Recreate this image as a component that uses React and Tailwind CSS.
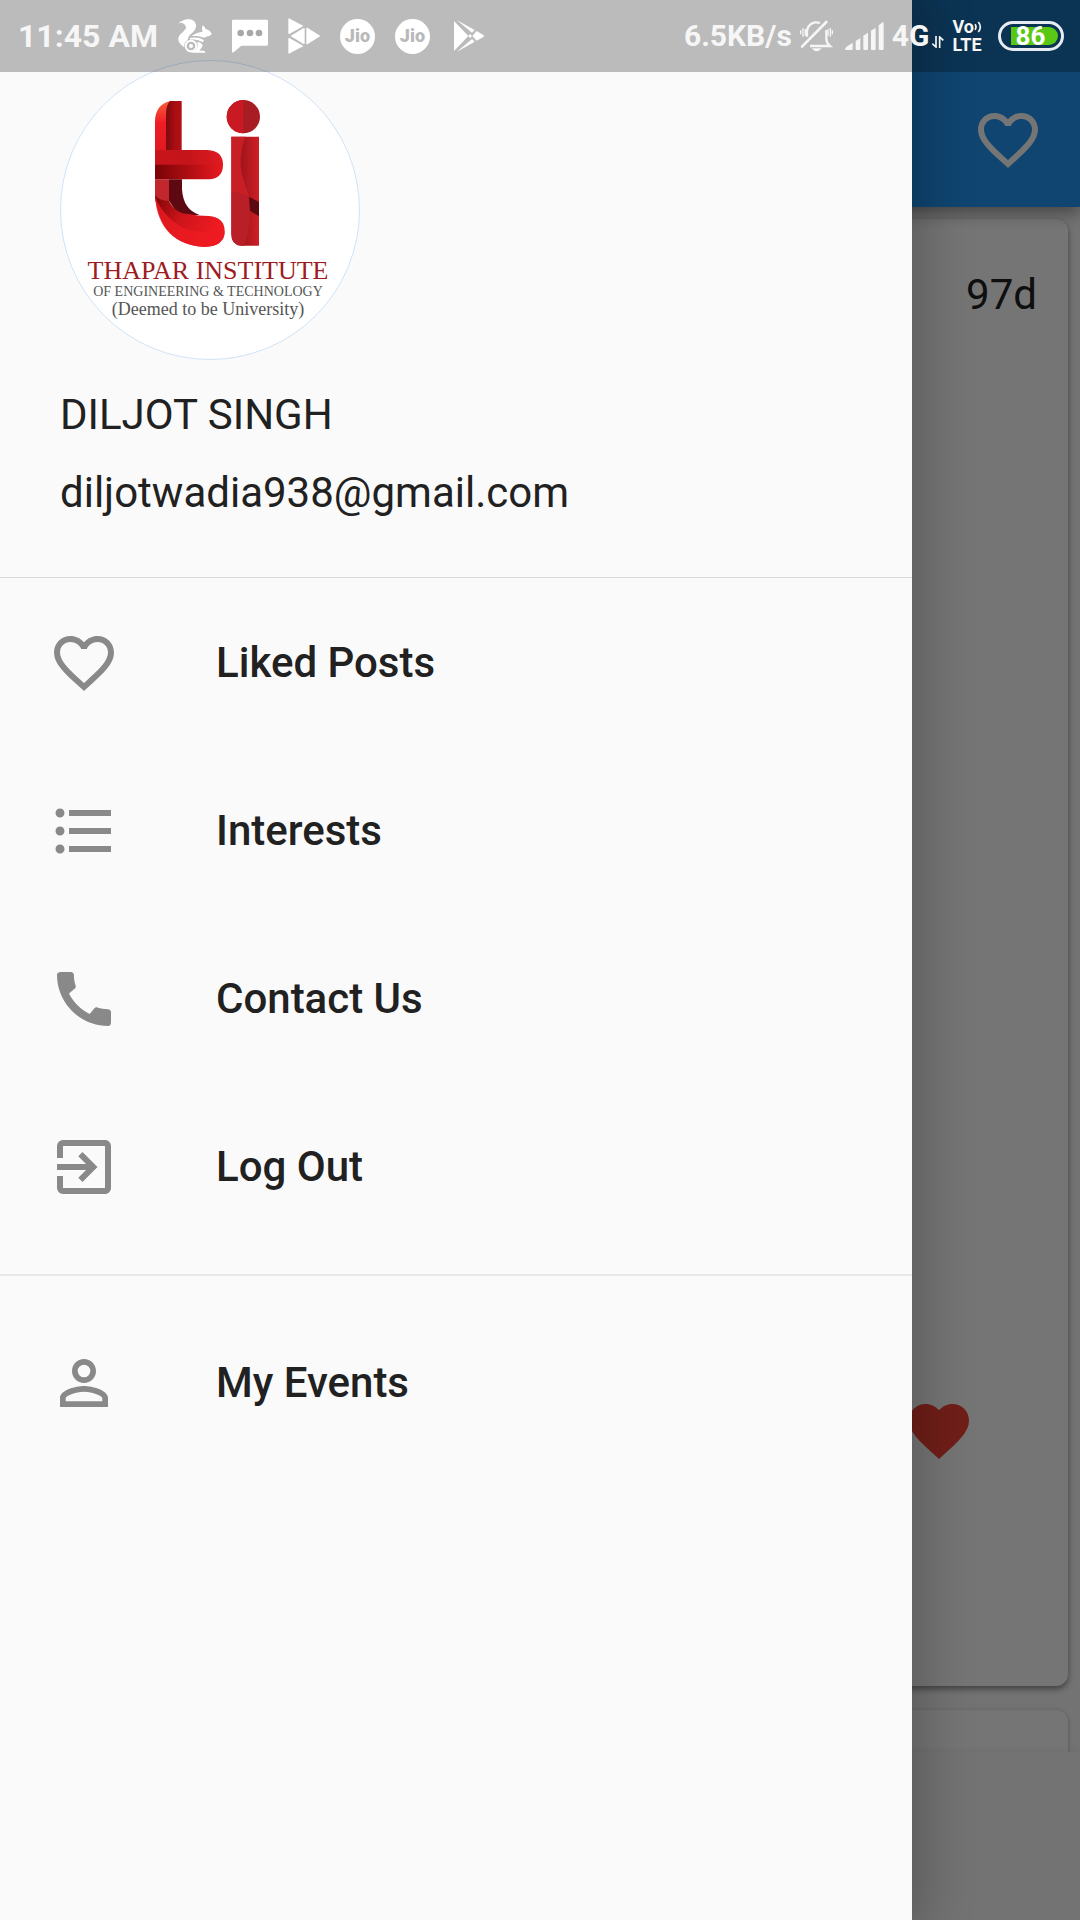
import React from "react";
import {
  MdCall,
  MdExitToApp,
  MdFavorite,
  MdFavoriteBorder,
  MdFormatListBulleted,
  MdPersonOutline,
} from "react-icons/md";

function SquirrelIcon() {
  return (
    <svg className="h-[34px] w-[34px]" viewBox="0 0 102 102" fill="currentColor" aria-hidden="true">
      <path d="M1 14C9 4 24-1 37 1c13 3 20 14 16 26-3 11-15 17-20 24-4 6-3 10-4 13-8 4-12 12-10 21C6 77 0 68 1 58c2-14 18-20 22-29 3-9-4-16-12-18-4 0-7 1-10 3Z" />
      <path d="M74 19c5 4 8 7 9 11 9 2 15 7 18 15-2 5-8 7-16 8-4 1-6 3-6 3-14-5-24-6-38-5 12-8 21-12 33-13-3-7-2-13 0-19Z" />
      <path d="M35 57c17-4 34-1 43 7l-4 6c-10-7-23-10-37-8Z" />
      <path d="M58 68c8 2 13 5 16 10-2 7-6 12-10 17h12c4 0 6 2 6 6H36c18-3 27-16 22-33Z" />
      <circle cx="39" cy="81" r="16" fill="none" stroke="currentColor" strokeWidth="6" />
      <circle cx="39" cy="81" r="6" />
    </svg>
  );
}

function ChatIcon() {
  return (
    <svg className="h-[34px] w-9" viewBox="0 0 108 102" aria-hidden="true">
      <path fill="currentColor" d="M4 2h100q4 0 4 4v70q0 4-4 4H28L3 101q-3 0-3-4V6q0-4 4-4Z" />
      <g fill="#a8a8a8">
        <circle cx="26" cy="42" r="10" />
        <circle cx="54" cy="42" r="10" />
        <circle cx="81" cy="42" r="10" />
      </g>
    </svg>
  );
}

function TrianglesIcon() {
  return (
    <svg
      className="h-9 w-8"
      viewBox="0 0 96 108"
      fill="currentColor"
      stroke="currentColor"
      strokeWidth="4"
      strokeLinejoin="round"
      aria-hidden="true"
    >
      <path d="M3 3 43 24 3 46ZM3 62l40 22L3 105ZM11 54 48 32v44ZM57 31l37 23-37 23Z" />
    </svg>
  );
}

function PlayIcon() {
  return (
    <svg className="h-8 w-[30px]" viewBox="0 0 90 96" fill="currentColor" aria-hidden="true">
      <path d="M0 3 43 48 0 93Z" />
      <path d="M8 0 62 30 54 38ZM8 96 62 65 54 57Z" />
      <path d="m48 42 6 6-6 6-5-6ZM68 33l20 12q4 3 0 6L68 62 55 48Z" />
    </svg>
  );
}

function JioBadge() {
  return (
    <span className="flex size-[35px] items-center justify-center rounded-full bg-white text-[18px] font-black leading-none text-[#b9b9b9]">
      Jio
    </span>
  );
}

function MutedBellIcon() {
  return (
    <svg className="h-8 w-[33px]" viewBox="0 0 99 96" fill="none" stroke="currentColor" strokeWidth="7" aria-hidden="true">
      <path d="M6 80 79 6" strokeWidth="8" strokeLinecap="round" />
      <path d="M21 50V34C23 12 42 3 60 9M30 78h60c-9-8-11-13-11-23V30" />
      <path d="M2 31v12M9 24v26M16 27v20M84 27v20M91 24v26M97 31v12" strokeWidth="4" />
      <path d="M35 85h30q-15 18-30 0Z" fill="currentColor" stroke="none" />
    </svg>
  );
}

function SignalIcon() {
  return (
    <svg className="h-7 w-[39px]" viewBox="0 0 117 84" fill="currentColor" aria-hidden="true">
      <path d="M0 80q1-5 23-18v19q0 3-3 3H3q-3 0-3-4ZM32 57l14-9v33q0 3-3 3h-8q-3 0-3-3ZM55 41l14-9v49q0 3-3 3h-8q-3 0-3-3ZM78 26l14-9v64q0 3-3 3h-8q-3 0-3-3ZM101 10l12-9q3-1 3 3v77q0 3-3 3h-9q-3 0-3-3Z" />
    </svg>
  );
}

function DataArrowsIcon() {
  return (
    <svg className="h-3 w-3" viewBox="0 0 36 36" fill="none" stroke="currentColor" strokeWidth="5" aria-hidden="true">
      <path d="M12 0v33L1 23M23 36V3l11 10" />
    </svg>
  );
}

function VoiceWaves() {
  return (
    <svg className="h-3 w-2" viewBox="0 0 24 36" fill="none" stroke="currentColor" strokeWidth="5" aria-hidden="true">
      <path d="M3 10q6 8 0 16M13 3q12 15 0 30" />
    </svg>
  );
}

function Battery() {
  return (
    <span className="flex h-[30px] w-[66px] rounded-full border-[3px] border-[#e8ecf0] py-[3px] pl-[10px] pr-[3px]">
      <span className="flex flex-1 items-center justify-center rounded-l-xs rounded-r-full bg-[#58c716] pr-2 text-[26px] font-bold leading-none text-white">
        86
      </span>
    </span>
  );
}

function StatusBar() {
  return (
    <div className="absolute inset-x-0 top-0 z-30 flex h-[72px] items-center justify-between bg-black/25 pl-[18px] pr-4 font-bold leading-none text-[#f6f6f6]">
      <div className="flex items-center gap-5 text-[32px] text-white">
        <span className="text-[#f6f6f6]">11:45 AM</span>
        <SquirrelIcon />
        <ChatIcon />
        <TrianglesIcon />
        <JioBadge />
        <JioBadge />
        <span className="pl-1">
          <PlayIcon />
        </span>
      </div>
      <div className="flex items-center gap-2 text-[30px]">
        <span>6.5KB/s</span>
        <MutedBellIcon />
        <span className="pl-1">
          <SignalIcon />
        </span>
        <span className="flex items-center gap-[3px]">
          4G
          <span className="pt-3">
            <DataArrowsIcon />
          </span>
        </span>
        <span className="flex flex-col items-start text-[18px] leading-[18px]">
          <span className="flex items-center">
            Vo
            <VoiceWaves />
          </span>
          <span>LTE</span>
        </span>
        <span className="pl-2">
          <Battery />
        </span>
      </div>
    </div>
  );
}

function InstituteMark() {
  return (
    <svg className="h-[153px] w-[114px]" viewBox="303 141 342 459" role="img" aria-label="ti">
      <defs>
        <linearGradient id="stemLeft" x1="0" y1="0" x2="0" y2="1">
          <stop offset="0" stopColor="#f8603a" />
          <stop offset="0.45" stopColor="#ee1c25" />
          <stop offset="1" stopColor="#e01a22" />
        </linearGradient>
        <linearGradient id="stemRight" x1="0" y1="0" x2="1" y2="0">
          <stop offset="0" stopColor="#7c0a0e" />
          <stop offset="0.6" stopColor="#ab0d13" />
          <stop offset="1" stopColor="#b01016" />
        </linearGradient>
        <linearGradient id="barTop" x1="0" y1="0" x2="1" y2="0">
          <stop offset="0" stopColor="#c8141b" />
          <stop offset="0.5" stopColor="#c4151b" />
          <stop offset="1" stopColor="#e01a21" />
        </linearGradient>
        <linearGradient id="barBottom" x1="0" y1="0" x2="1" y2="0">
          <stop offset="0" stopColor="#780306" />
          <stop offset="1" stopColor="#e8191f" />
        </linearGradient>
        <linearGradient id="hook" x1="0" y1="0" x2="1" y2="0.3">
          <stop offset="0" stopColor="#7d0508" />
          <stop offset="0.45" stopColor="#cc141a" />
          <stop offset="1" stopColor="#f01b22" />
        </linearGradient>
        <linearGradient id="iBody" x1="0" y1="0" x2="1" y2="0">
          <stop offset="0" stopColor="#c51d24" />
          <stop offset="0.4" stopColor="#a3151b" />
          <stop offset="1" stopColor="#cf1f27" />
        </linearGradient>
      </defs>
      <path d="M315 300V215q0-50 45-62l-12 70v77Z" fill="url(#stemLeft)" />
      <path d="M348 300V195q0-30 12-42h35v147Z" fill="url(#stemRight)" />
      <path d="M315 388h42v75l-39-5q-3-12-3-22Z" fill="#c1272d" />
      <path d="M357 388h39v30q4 62 52 76l-60 6-31-48Z" fill="#5e0812" />
      <path d="M315 436q14 17 42 17 20 40 65 40 20 5 55 5 47 4 47 46 0 45-60 47-133-5-149-155Z" fill="url(#hook)" />
      <path d="M315 440q10 140 149 151 60-2 60-47-70 10-122-10-60-30-87-94Z" fill="#ee1a22" fillOpacity="0.8" />
      <path d="M315 300h158q46 2 46 45H315Z" fill="url(#barTop)" />
      <path d="M315 344h204q0 42-43 44H315Z" fill="url(#barBottom)" />
      <circle cx="580" cy="200" r="50" fill="#a81c23" />
      <path d="M580 150a50 50 0 0 0 0 100Z" fill="#c91a23" />
      <path d="M544 260h83v327h-54q-29-2-29-35Z" fill="url(#iBody)" />
      <path d="M544 260h42q-26 70-5 130l16 50-53-16Z" fill="#c81f26" />
      <path d="M544 424l53 16q10 80-14 147h-10q-29-2-29-35Z" fill="#b91f26" />
      <path d="M597 440l30 16v43l-27-17Z" fill="#5e0812" />
    </svg>
  );
}

function Avatar() {
  return (
    <div className="flex size-[300px] flex-col items-center whitespace-nowrap rounded-full border border-[#d0e3f7] bg-white pr-1 pt-9 font-['Liberation_Serif',serif] text-[#555]">
      <InstituteMark />
      <div className="mt-2 text-[26px] leading-[26px] text-[#9c1c22]">THAPAR INSTITUTE</div>
      <div className="text-[14px] leading-4">OF ENGINEERING &amp; TECHNOLOGY</div>
      <div className="text-[18px] leading-[18px]">(Deemed to be University)</div>
    </div>
  );
}

function MenuItem({ icon: Icon, label }) {
  return (
    <li>
      <button type="button" className="flex h-[168px] w-full items-center gap-24 pl-12 text-left font-medium">
        <Icon className="size-[72px] text-[#898989]" aria-hidden="true" />
        {label}
      </button>
    </li>
  );
}

function Drawer() {
  return (
    <aside className="absolute inset-y-0 left-0 z-20 w-[calc(100%-168px)] bg-[#fafafa] text-[42px] leading-[48px] text-[#212121] shadow-[0_0_48px_12px_rgba(0,0,0,0.22)]">
      <div className="border-b border-[#dadada] px-[60px] py-[60px]">
        <Avatar />
        <p className="mt-[31px]">DILJOT SINGH</p>
        <p className="mt-[30px]">diljotwadia938@gmail.com</p>
      </div>
      <nav className="pt-px">
        <ul className="pb-[23px]">
          <MenuItem icon={MdFavoriteBorder} label="Liked Posts" />
          <MenuItem icon={MdFormatListBulleted} label="Interests" />
          <MenuItem icon={MdCall} label="Contact Us" />
          <MenuItem icon={MdExitToApp} label="Log Out" />
        </ul>
        <ul className="border-t-2 border-[#e8e8e8] pt-[23px]">
          <MenuItem icon={MdPersonOutline} label="My Events" />
        </ul>
      </nav>
    </aside>
  );
}

function Feed() {
  return (
    <div className="flex min-h-screen flex-col bg-[#fafafa]">
      <header className="z-10 flex h-[207px] items-end justify-end bg-[#2196f3] pb-[31px] pr-9 text-white shadow-[0_6px_16px_rgba(0,0,0,0.4)]">
        <button type="button" aria-label="Liked posts">
          <MdFavoriteBorder className="size-[72px]" />
        </button>
      </header>
      <main className="flex flex-1 flex-col gap-6 px-3 pt-3">
        <article className="flex h-[1467px] flex-col items-end justify-between rounded-xl bg-white pb-[219px] pt-[52px] shadow-[0_3px_6px_rgba(0,0,0,0.45)]">
          <time className="pr-[31px] text-[42px] leading-[48px] text-[#212121]">97d</time>
          <button type="button" aria-label="Like" className="mr-[93px] text-[#f44336]">
            <MdFavorite className="size-[72px]" />
          </button>
        </article>
        <article className="flex-1 rounded-t-xl bg-white shadow-[0_1px_4px_rgba(0,0,0,0.3)]" />
      </main>
      <footer className="z-10 h-[168px] bg-[#fafafa] shadow-[0_0_8px_rgba(0,0,0,0.08)]" />
    </div>
  );
}

export default function App() {
  return (
    <div className="relative min-h-screen overflow-hidden font-[Roboto,sans-serif]">
      <Feed />
      <div className="absolute inset-0 z-10 bg-black/54" aria-hidden="true" />
      <Drawer />
      <StatusBar />
    </div>
  );
}
